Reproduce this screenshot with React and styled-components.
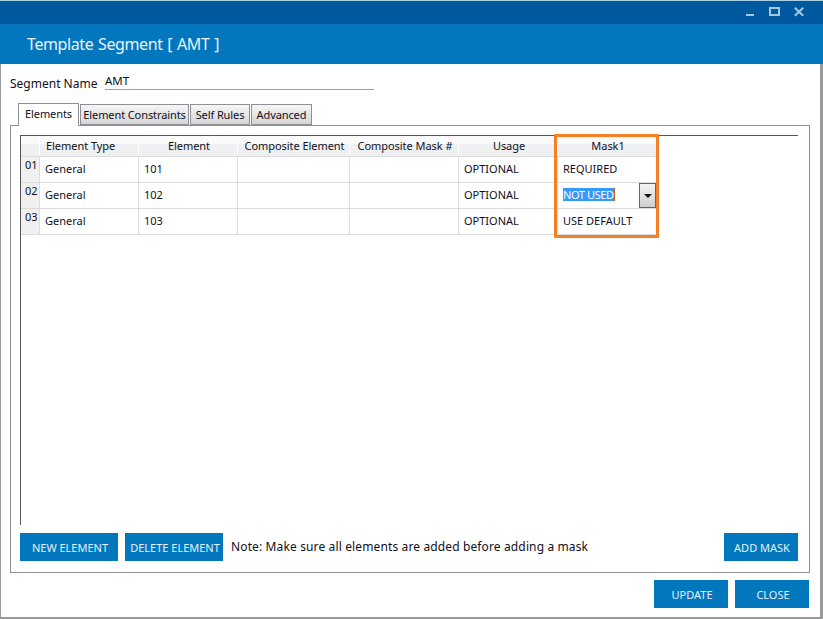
import React from "react";
import styled, { createGlobalStyle } from "styled-components";

const GlobalStyle = createGlobalStyle`
  html, body {
    margin: 0;
    padding: 0;
    background: #fff;
  }
  * {
    box-sizing: border-box;
  }
`;

const FONT = `"Noto Sans", "DejaVu Sans", sans-serif`;

const Window = styled.div`
  width: 823px;
  height: 619px;
  display: flex;
  flex-direction: column;
  font-family: ${FONT};
  font-size: 11px;
  color: #10101a;
  background: #fff;
  border-top: 1px solid #a9cfe4;
  border-bottom: 2px solid #9a9a9a;
  overflow: hidden;
`;

const TitleBar = styled.div`
  height: 23px;
  background: #00589e;
  display: flex;
  align-items: flex-start;
  justify-content: flex-end;
  gap: 11px;
  padding: 5px 17px 0 0;
`;

const WinButton = styled.svg`
  width: 14px;
  height: 14px;
  display: block;
`;

const Header = styled.div`
  height: 40px;
  background: #0377bd;
  color: #e8f3fa;
  font-size: 16px;
  display: flex;
  align-items: center;
  padding-left: 27px;
  letter-spacing: -0.4px;
  word-spacing: 1px;
`;

const Body = styled.div`
  flex: 1;
  display: flex;
  flex-direction: column;
  border-left: 1px solid #9a9a9a;
  border-right: 3px solid #9a9a9a;
  padding: 0 10px 0 9px;
`;

const NameRow = styled.div`
  height: 39px;
  display: flex;
  align-items: flex-start;
  padding-top: 11px;
  font-size: 12px;
`;

const NameLabel = styled.label`
  width: 95px;
  line-height: 17px;
`;

const NameValue = styled.div`
  width: 269px;
  height: 17px;
  margin-top: -2px;
  border-bottom: 1px solid #a0a0a0;
  font-size: 11.5px;
  line-height: 15px;
`;

const TabStrip = styled.div`
  height: 22px;
  display: flex;
  align-items: flex-end;
  padding-left: 8px;
  gap: 1px;
  position: relative;
  z-index: 1;
`;

const Tab = styled.div`
  height: ${(p) => (p.$active ? "23px" : "21px")};
  width: ${(p) => p.$w}px;
  margin-bottom: ${(p) => (p.$active ? "-1px" : "0")};
  border: 1px solid #8f8f98;
  border-bottom: ${(p) => (p.$active ? "none" : "1px solid #8f8f98")};
  background: ${(p) =>
    p.$active ? "#fff" : "linear-gradient(#f6f6f6, #d6d6d6)"};
  display: flex;
  align-items: center;
  justify-content: center;
  padding-bottom: ${(p) => (p.$active ? "3px" : "0")};
  letter-spacing: -0.1px;
  white-space: nowrap;
`;

const Panel = styled.div`
  width: 800px;
  height: 448px;
  border: 1px solid #8f8f98;
  padding: 9px 11px 10px 9px;
  display: flex;
  flex-direction: column;
`;

const GridArea = styled.div`
  position: relative;
  height: 390px;
  border-top: 1px solid #555;
  border-left: 1px solid #555;
`;

const HeadRow = styled.div`
  display: grid;
  grid-template-columns: ${(p) => p.$cols};
  height: 21px;
  width: 636px;
  border-bottom: 1px solid #dcdcdc;
`;

const HeadCell = styled.div`
  background: linear-gradient(#fafafa 0 40%, #eef0f2 40% 100%);
  border-right: 1px solid #fff;
  text-align: ${(p) => (p.$left ? "left" : "center")};
  padding-left: ${(p) => (p.$left ? "6px" : "2px")};
  line-height: 20px;
  letter-spacing: -0.05px;
  white-space: nowrap;
`;

const Row = styled.div`
  display: grid;
  grid-template-columns: ${(p) => p.$cols};
  height: 26px;
  width: 636px;
  border-bottom: 1px solid #dcdcdc;
`;

const RowNum = styled.div`
  background: #f0f0f0;
  padding: 0 0 0 4px;
  border-right: 1px solid #dcdcdc;
  line-height: 16px;
`;

const Cell = styled.div`
  position: relative;
  border-right: 1px solid #dcdcdc;
  padding-left: 5px;
  line-height: 23px;
  white-space: nowrap;
`;

const Selected = styled.span`
  background: #3399ff;
  color: #fff;
  display: inline-block;
  line-height: 13px;
  letter-spacing: -0.4px;
  border-right: 1px solid #b5651d;
`;

const DropButton = styled.div`
  position: absolute;
  right: 0;
  top: 0;
  width: 17px;
  height: 25px;
  border: 1px solid #666;
  background: linear-gradient(#f4f4f4, #cfcfcf);
  display: flex;
  align-items: center;
  justify-content: center;
  &::after {
    content: "";
    border-left: 4px solid transparent;
    border-right: 4px solid transparent;
    border-top: 4px solid #111;
  }
`;

const Highlight = styled.div`
  position: absolute;
  left: 533px;
  top: -2px;
  width: 105px;
  height: 104px;
  border: 3px solid #f77f26;
  pointer-events: none;
`;

const ActionRow = styled.div`
  display: flex;
  align-items: center;
  gap: 7px;
  margin-top: 8px;
`;

const Button = styled.button`
  width: ${(p) => p.$w}px;
  height: 28px;
  border: none;
  background: #0377bd;
  color: #e4f1f9;
  font-family: ${FONT};
  font-size: 11px;
  padding: 0 0 0 2px;
  white-space: nowrap;
`;

const Note = styled.div`
  flex: 1;
  font-size: 12px;
  letter-spacing: 0.13px;
  margin-left: 1px;
  margin-top: -1px;
`;

const Footer = styled.div`
  display: flex;
  justify-content: flex-end;
  gap: 7px;
  margin-top: 7px;
  padding-right: 1px;
`;

const COLS = "19px 99px 99px 112px 109px 99px 99px";

const HEADERS = [
  { label: "" },
  { label: "Element Type", left: true },
  { label: "Element" },
  { label: "Composite Element" },
  { label: "Composite Mask #" },
  { label: "Usage" },
  { label: "Mask1" },
];

const ROWS = [
  { num: "01", element: "101", mask: "REQUIRED" },
  { num: "02", element: "102", mask: "NOT USED", editing: true },
  { num: "03", element: "103", mask: "USE DEFAULT" },
];

export default function App() {
  return (
    <Window>
      <GlobalStyle />
      <TitleBar>
        <WinButton viewBox="0 0 14 14">
          <rect x="4" y="8" width="8" height="2" fill="#a5c8e2" />
        </WinButton>
        <WinButton viewBox="0 0 14 14">
          <rect x="3" y="2" width="9" height="7" fill="none" stroke="#a5c8e2" strokeWidth="2" />
        </WinButton>
        <WinButton viewBox="0 0 14 14">
          <path d="M2.8 1.8 L11.2 9.7 M11.2 1.8 L2.8 9.7" stroke="#a5c8e2" strokeWidth="2" />
        </WinButton>
      </TitleBar>
      <Header>Template Segment [ AMT ]</Header>
      <Body>
        <NameRow>
          <NameLabel>Segment Name</NameLabel>
          <NameValue>AMT</NameValue>
        </NameRow>
        <TabStrip>
          <Tab $active $w={61}>Elements</Tab>
          <Tab $w={109}>Element Constraints</Tab>
          <Tab $w={60}>Self Rules</Tab>
          <Tab $w={61}>Advanced</Tab>
        </TabStrip>
        <Panel>
          <GridArea>
            <HeadRow $cols={COLS}>
              {HEADERS.map((h, i) => (
                <HeadCell key={i} $left={h.left}>{h.label}</HeadCell>
              ))}
            </HeadRow>
            {ROWS.map((r) => (
              <Row key={r.num} $cols={COLS}>
                <RowNum>{r.num}</RowNum>
                <Cell>General</Cell>
                <Cell>{r.element}</Cell>
                <Cell />
                <Cell />
                <Cell>OPTIONAL</Cell>
                <Cell>
                  {r.editing ? (
                    <>
                      <Selected>{r.mask}</Selected>
                      <DropButton />
                    </>
                  ) : (
                    r.mask
                  )}
                </Cell>
              </Row>
            ))}
            <Highlight />
          </GridArea>
          <ActionRow>
            <Button $w={98}>NEW ELEMENT</Button>
            <Button $w={98}>DELETE ELEMENT</Button>
            <Note>Note: Make sure all elements are added before adding a mask</Note>
            <Button $w={74}>ADD MASK</Button>
          </ActionRow>
        </Panel>
        <Footer>
          <Button $w={74}>UPDATE</Button>
          <Button $w={74}>CLOSE</Button>
        </Footer>
      </Body>
    </Window>
  );
}
